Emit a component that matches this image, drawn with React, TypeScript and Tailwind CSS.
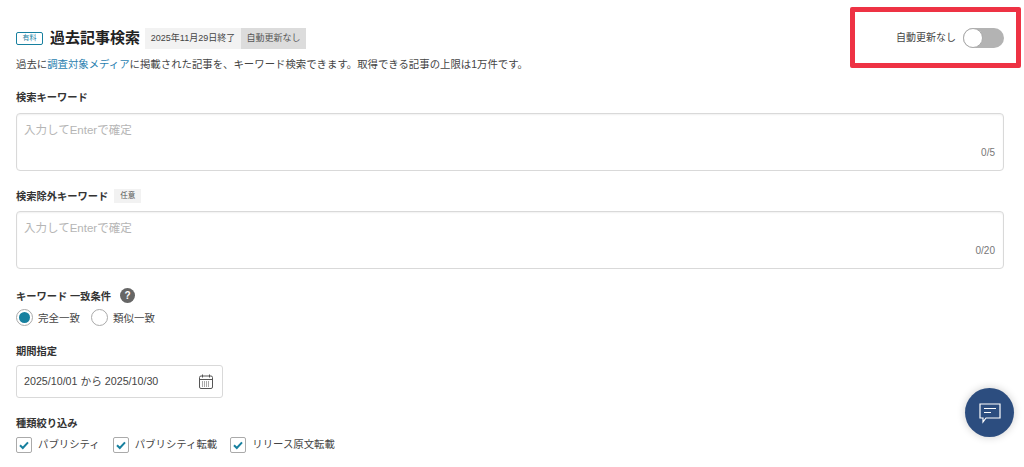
import type { ReactNode } from "react";

const font = { fontFamily: '"Liberation Sans", "Noto Sans CJK JP", sans-serif' };

function FieldLabel({ children }: { children: ReactNode }) {
  return <span className="block h-[14px] text-[10.25px] leading-[16px] font-bold text-[#333]">{children}</span>;
}

function KeywordBox({ count }: { count: string }) {
  return (
    <div className="flex h-[58px] flex-col justify-between rounded-[4px] border border-[#d9d9d9] bg-white pt-[8px] pr-[8px] pb-[11px] pl-[7px] shadow-[inset_0_1px_2px_rgba(0,0,0,0.06)]">
      <span className="text-[11.5px] leading-[17px] text-[#b5b5b5]">入力してEnterで確定</span>
      <span className="self-end text-[10px] leading-[13px] text-[#777]">{count}</span>
    </div>
  );
}

function Radio({ label, checked }: { label: string; checked?: boolean }) {
  return (
    <span className="flex items-center gap-[5px]">
      <span className="flex h-[17px] w-[17px] items-center justify-center rounded-full border border-[#aaa] bg-white">
        {checked ? <span className="h-[11px] w-[11px] rounded-full bg-[#17809f]" /> : null}
      </span>
      <span className="text-[10.5px] leading-[14px] text-[#444]">{label}</span>
    </span>
  );
}

function Check({ label }: { label: string }) {
  return (
    <span className="flex items-center gap-[6px]">
      <span className="flex h-[16px] w-[16px] items-center justify-center rounded-[2px] border border-[#aaa] bg-white">
        <svg width="12" height="12" viewBox="0 0 12 12" fill="none">
          <path d="M2 6.2 4.8 9 10 3.4" stroke="#17809f" strokeWidth="2" />
        </svg>
      </span>
      <span className="text-[10.4px] leading-[14px] text-[#444]">{label}</span>
    </span>
  );
}

export default function App() {
  return (
    <div style={font} className="relative h-[467px] w-[1024px] overflow-hidden bg-white">
      <div className="flex flex-col pt-[28px] pr-[20px] pl-[16px]">
        <div className="flex h-[21px] items-center">
          <span className="mr-[7px] flex h-[13px] w-[27px] items-center justify-center rounded-[2px] border border-[#17809f] text-[7px] text-[#17809f]">
            有料
          </span>
          <span className="mr-[5px] mb-[1px] text-[15px] leading-[20px] font-bold text-[#222]">過去記事検索</span>
          <span className="flex h-[21px] w-[96px] items-center justify-center bg-[#f2f2f2] text-[9px] text-[#444]">
            2025年11月29日終了
          </span>
          <span className="flex h-[21px] w-[65px] items-center justify-center bg-[#dcdcdc] text-[9px] text-[#555]">
            自動更新なし
          </span>
        </div>
        <p className="mt-[9px] text-[10.4px] leading-[14px] text-[#444]">
          過去に<span className="text-[#2a7fb0]">調査対象メディア</span>
          に掲載された記事を、キーワード検索できます。取得できる記事の上限は1万件です。
        </p>

        <div className="mt-[18px] flex flex-col gap-[9px]">
          <FieldLabel>検索キーワード</FieldLabel>
          <KeywordBox count="0/5" />
        </div>

        <div className="mt-[18px] flex flex-col gap-[8px]">
          <div className="flex items-center gap-[6px]">
            <FieldLabel>検索除外キーワード</FieldLabel>
            <span className="flex h-[14px] items-center bg-[#f2f2f2] px-[6px] text-[7.5px] text-[#555]">任意</span>
          </div>
          <KeywordBox count="0/20" />
        </div>

        <div className="mt-[19px] flex items-center gap-[9px]">
          <FieldLabel>キーワード 一致条件</FieldLabel>
          <span className="flex h-[15px] w-[15px] items-center justify-center rounded-full bg-[#666] text-[10px] font-bold text-white">
            ?
          </span>
        </div>
        <div className="mt-[6px] flex gap-[11px]">
          <Radio label="完全一致" checked />
          <Radio label="類似一致" />
        </div>

        <div className="mt-[18px]">
          <FieldLabel>期間指定</FieldLabel>
        </div>
        <div className="mt-[7px] flex h-[33px] w-[207px] items-center justify-between rounded-[3px] border border-[#d9d9d9] pr-[9px] pl-[7px]">
          <span className="text-[10.7px] text-[#444]">2025/10/01 から 2025/10/30</span>
          <svg width="14" height="15" viewBox="0 0 14 15" fill="none" stroke="#555">
            <rect x="0.5" y="2" width="13" height="12.5" rx="1.5" />
            <path d="M.5 5.5h13M3.5.5v3M10.5.5v3" />
            <path d="M3 8h8M3 10h8M3 12h8" strokeDasharray="1 1" />
          </svg>
        </div>

        <div className="mt-[18px]">
          <FieldLabel>種類絞り込み</FieldLabel>
        </div>
        <div className="mt-[7px] flex gap-[13px]">
          <Check label="パブリシティ" />
          <Check label="パブリシティ転載" />
          <Check label="リリース原文転載" />
        </div>
      </div>

      {/* annotation box over the toggle */}
      <div className="absolute top-[7px] left-[850px] flex h-[61px] w-[171px] items-center justify-end gap-[7px] rounded-[2px] border-[5px] border-[#ee3244] bg-white pr-[12px]">
        <span className="text-[10px] text-[#444]">自動更新なし</span>
        <span className="flex h-[20px] w-[41px] items-center rounded-full bg-[#b3b3b3]">
          <span className="h-[20px] w-[20px] rounded-full border border-[#aaa] bg-white" />
        </span>
      </div>

      <button className="absolute top-[388px] left-[965px] flex h-[49px] w-[49px] items-center justify-center rounded-full bg-[#2c4d7f] shadow-[0_0_8px_rgba(0,0,0,0.2)]">
        <svg width="24" height="22" viewBox="0 0 24 22" fill="none" stroke="#fff" strokeWidth="1.2">
          <path d="M2 2h20v14H8l-3 4v-4H2z" />
          <path d="M6 6.5h12M6 10.5h7" />
        </svg>
      </button>
    </div>
  );
}
